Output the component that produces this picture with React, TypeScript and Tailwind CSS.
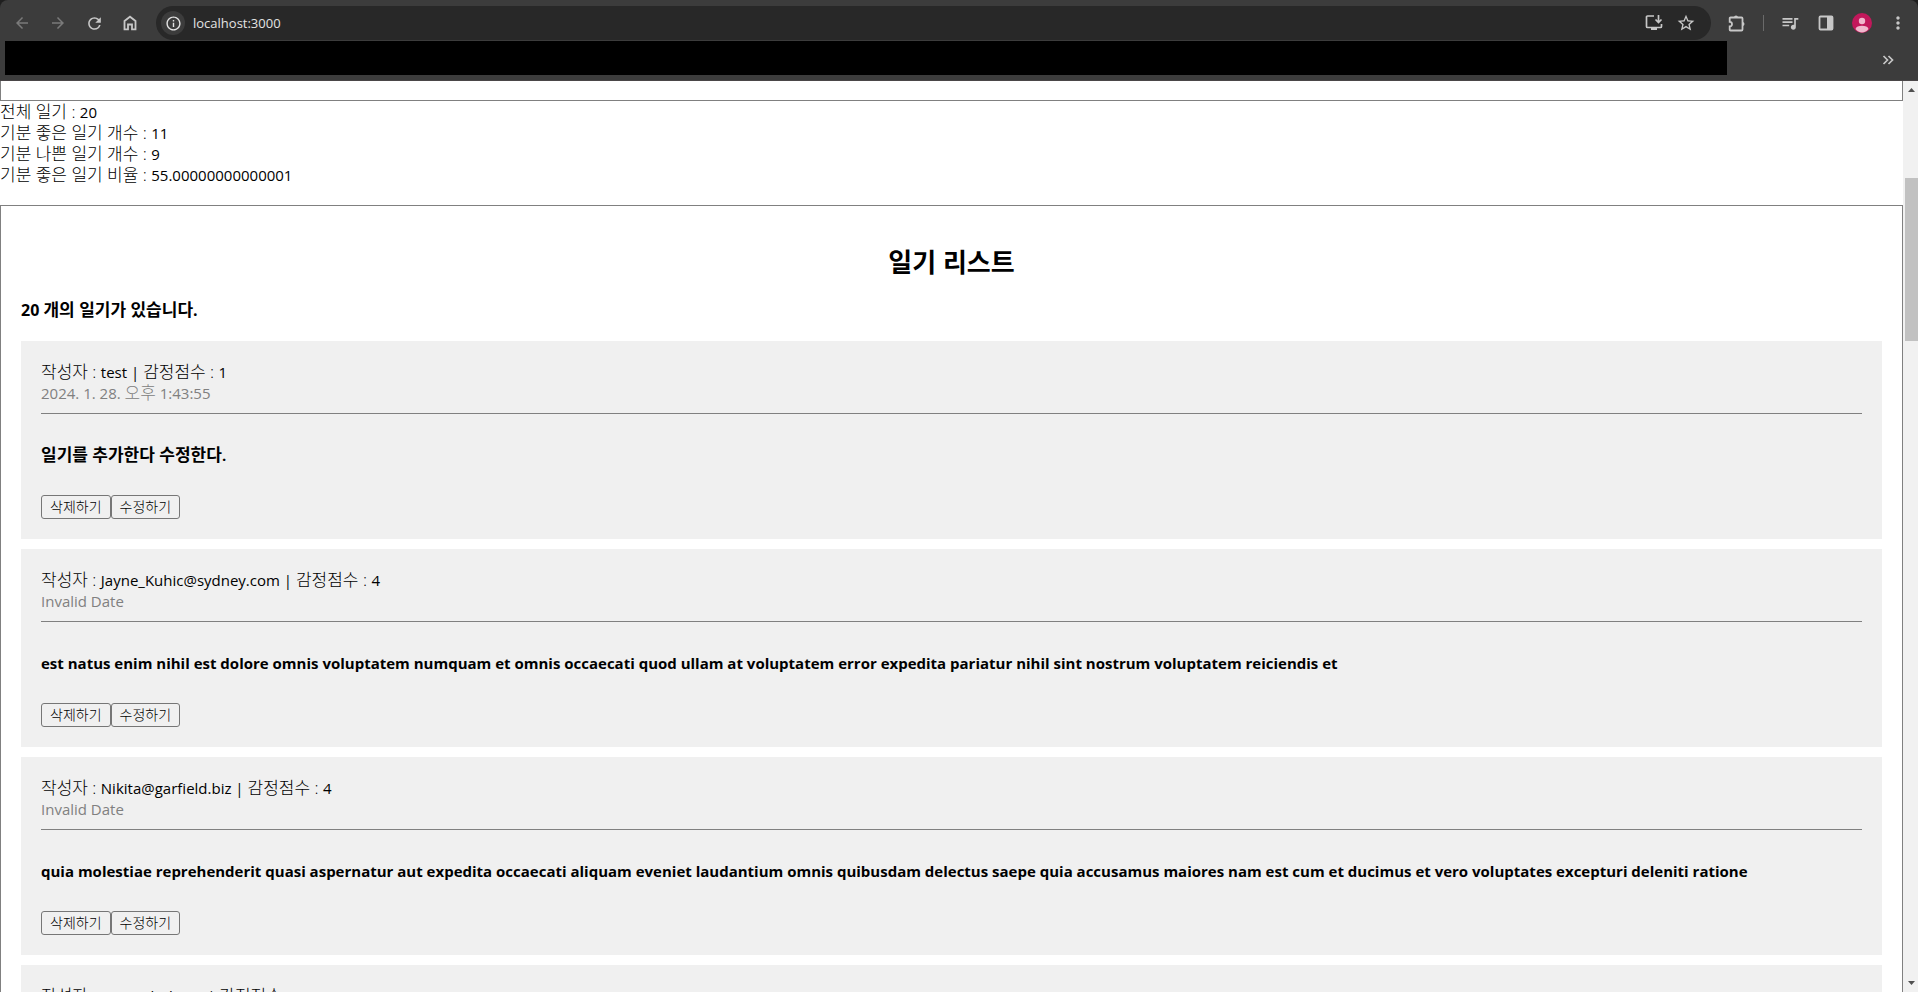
import React from 'react';
import {
  MdArrowBack,
  MdArrowForward,
  MdInfoOutline,
  MdMoreVert,
  MdQueueMusic,
  MdRefresh,
  MdStarBorder,
} from 'react-icons/md';
import clsx from 'clsx';

interface Diary {
  id: number;
  author: string;
  emotion: number;
  date: string;
  content: string;
}

const diaries: Diary[] = [
  {
    id: 1,
    author: 'test',
    emotion: 1,
    date: '2024. 1. 28. 오후 1:43:55',
    content: '일기를 추가한다 수정한다.',
  },
  {
    id: 2,
    author: 'Jayne_Kuhic@sydney.com',
    emotion: 4,
    date: 'Invalid Date',
    content:
      'est natus enim nihil est dolore omnis voluptatem numquam et omnis occaecati quod ullam at voluptatem error expedita pariatur nihil sint nostrum voluptatem reiciendis et',
  },
  {
    id: 3,
    author: 'Nikita@garfield.biz',
    emotion: 4,
    date: 'Invalid Date',
    content:
      'quia molestiae reprehenderit quasi aspernatur aut expedita occaecati aliquam eveniet laudantium omnis quibusdam delectus saepe quia accusamus maiores nam est cum et ducimus et vero voluptates excepturi deleniti ratione',
  },
  {
    id: 4,
    author: 'Lew@alysha.tv',
    emotion: 4,
    date: 'Invalid Date',
    content:
      'non et atque occaecati deserunt quas accusantium unde odit nobis qui voluptatem quia voluptas consequuntur itaque dolor et qui rerum deleniti ut occaecati',
  },
];

const stats = [
  {label: '전체 일기', value: '20'},
  {label: '기분 좋은 일기 개수', value: '11'},
  {label: '기분 나쁜 일기 개수', value: '9'},
  {label: '기분 좋은 일기 비율', value: '55.00000000000001'},
];

// Hangul runs (with a trailing colon) are larger than the latin text around them
const splitHangul = (text: string) =>
  text.split(/([가-힣]+(?: [가-힣]+)*(?: : )?)/).filter(Boolean);

const Mixed = ({text, bold = false}: {text: string; bold?: boolean}) => (
  <>
    {splitHangul(text).map((part, i) =>
      /[가-힣]/.test(part) ? (
        <span
          key={i}
          className={clsx('text-[17px] leading-none', !bold && 'font-light')}
        >
          {part}
        </span>
      ) : (
        part
      )
    )}
  </>
);

interface IconButtonProps {
  label: string;
  className?: string;
  children: React.ReactNode;
}

const IconButton = ({label, className, children}: IconButtonProps) => (
  <button
    aria-label={label}
    className={clsx('flex size-5 items-center justify-center', className)}
  >
    {children}
  </button>
);

const BrowserBar = () => (
  <header className="shrink-0 bg-[#1f1f1f] text-[#c7c7c7]">
    <div className="rounded-t-lg border-b border-[#4a4648] bg-[#3c3c3c]">
      <div className="flex items-center pt-1.5 pr-[10px] pl-3">
        <nav className="flex items-center gap-4">
          <IconButton label="Back" className="text-[#7a7a7a]">
            <MdArrowBack size={18} />
          </IconButton>
          <IconButton label="Forward" className="text-[#7a7a7a]">
            <MdArrowForward size={18} />
          </IconButton>
          <IconButton label="Reload">
            <MdRefresh size={19} />
          </IconButton>
          <IconButton label="Home">
            <svg width="14" height="16" viewBox="0 0 14 16" fill="none">
              <path
                d="M1.500 6L7 1.700 12.500 6v8.300H9V9.500H5v4.800H1.500z"
                stroke="currentColor"
                strokeWidth="1.800"
              />
            </svg>
          </IconButton>
        </nav>
        <div className="ml-4 flex h-[34px] flex-1 items-center rounded-full bg-[#282828] pr-[15px] pl-[5px]">
          <button
            aria-label="Site information"
            className="flex size-6 items-center justify-center rounded-full bg-[#3c3c3c] text-[#e3e3e3]"
          >
            <MdInfoOutline size={17} />
          </button>
          <input
            aria-label="Address"
            defaultValue="localhost:3000"
            className="ml-2 flex-1 bg-transparent text-[13px] text-[#e3e3e3] outline-none"
          />
          <div className="flex items-center gap-3">
            <IconButton label="Install">
              <svg width="18" height="18" viewBox="0 0 18 18" fill="none">
                <path
                  d="M9 2H2.5a1 1 0 0 0-1 1v9.5a1 1 0 0 0 1 1h13a1 1 0 0 0 1-1V10"
                  stroke="currentColor"
                  strokeWidth="1.700"
                />
                <path
                  d="M13.500 1v7M10.500 5.500l3 3 3-3"
                  stroke="currentColor"
                  strokeWidth="1.700"
                />
                <path d="M6 13h6v3H6z" fill="currentColor" />
              </svg>
            </IconButton>
            <IconButton label="Bookmark">
              <MdStarBorder size={20} />
            </IconButton>
          </div>
        </div>
        <div className="ml-4 flex items-center">
          <IconButton label="Extensions">
            <svg width="18" height="18" viewBox="0 0 18 18" fill="none">
              <path
                d="M2.500 3.500h11a1 1 0 0 1 1 1v11a1 1 0 0 1-1 1h-11a.8.8 0 0 1-.8-.8v-3.200a2.300 2.300 0 0 0 0-4.600V4.300a.8.8 0 0 1 .8-.8z"
                stroke="currentColor"
                strokeWidth="1.800"
              />
              <path
                d="M6 3.500a2 2 0 0 1 4 0zM14.500 8a2 2 0 0 1 0 4z"
                fill="currentColor"
              />
            </svg>
          </IconButton>
          <span className="mx-4 h-4 w-px bg-[#6a6a6a]" />
          <div className="flex items-center gap-4">
            <IconButton label="Media">
              <MdQueueMusic size={20} />
            </IconButton>
            <IconButton label="Side panel">
              <svg width="16" height="16" viewBox="0 0 16 16" fill="none">
                <rect
                  x="1.500"
                  y="1.500"
                  width="13"
                  height="13"
                  rx="1"
                  stroke="currentColor"
                  strokeWidth="1.800"
                />
                <path d="M9 1.500h5.500v13H9z" fill="currentColor" />
              </svg>
            </IconButton>
            <IconButton label="Profile">
              <svg width="20" height="20" viewBox="0 0 20 20">
                <circle cx="10" cy="10" r="10" fill="#c2185b" />
                <circle cx="10" cy="8" r="3.200" fill="#f0b8cd" />
                <path
                  d="M3.500 16c.5-2 3.200-3.200 6.500-3.200s6 1.200 6.500 3.200c-1.500 2.200-4 3.400-6.500 3.400S5 18.200 3.500 16z"
                  fill="#f0b8cd"
                />
              </svg>
            </IconButton>
            <IconButton label="Menu">
              <MdMoreVert size={20} />
            </IconButton>
          </div>
        </div>
      </div>
      <div className="flex items-start pt-px pr-6 pb-[5px] pl-[5px]">
        <div className="mr-[155px] h-[34px] flex-1 bg-black" />
        <button aria-label="More bookmarks" className="mt-[13px]">
          <svg width="12" height="12" viewBox="0 0 12 12" fill="none">
            <path
              d="M1.500 2l4 4-4 4M6.500 2l4 4-4 4"
              stroke="currentColor"
              strokeWidth="1.700"
            />
          </svg>
        </button>
      </div>
    </div>
  </header>
);

const DiaryItem: React.FC<Diary> = ({author, emotion, date, content}) => (
  <article className="bg-[#f0f0f0] px-5 pt-[21px] pb-5">
    <div className="border-b border-[#808080] pb-[9px]">
      <p>
        <Mixed text={`작성자 : ${author} | 감정점수 : ${emotion}`} />
      </p>
      <p className="text-[#808080]">
        <Mixed text={date} />
      </p>
    </div>
    <p className="mt-[31px] mb-[29px] font-bold">
      <Mixed text={content} bold />
    </p>
    <div className="flex text-sm font-light">
      {['삭제하기', '수정하기'].map(label => (
        <button
          key={label}
          className="h-6 rounded-[3px] border border-[#767676] px-2 leading-none"
        >
          {label}
        </button>
      ))}
    </div>
  </article>
);

const Scrollbar = () => (
  <div className="flex w-[15px] shrink-0 flex-col items-center justify-between bg-[#f1f1f1] pt-[7px] pb-[7px] pl-px">
    <svg width="7" height="4" viewBox="0 0 7 4">
      <path d="M3.500 0L7 4H0z" fill="#505050" />
    </svg>
    <div className="mt-[86px] mb-auto h-[163px] w-[13px] self-end bg-[#c1c1c1]" />
    <svg width="7" height="4" viewBox="0 0 7 4">
      <path d="M0 0h7L3.500 4z" fill="#505050" />
    </svg>
  </div>
);

export default function App() {
  return (
    <div className="flex h-screen flex-col overflow-hidden bg-white font-['Open_Sans','Noto_Sans_CJK_KR',sans-serif] text-[15px] leading-[21px] text-black">
      <BrowserBar />
      <div className="flex min-h-0 flex-1">
        <main className="min-w-0 flex-1 overflow-hidden">
          <div className="h-5 border-x border-b border-[#808080]" />
          <section className="pt-px">
            {stats.map(({label, value}) => (
              <p key={label}>
                <Mixed text={`${label} : ${value}`} />
              </p>
            ))}
          </section>
          <section className="mt-[19px] border border-[#808080] p-5">
            <h2 className="my-5 text-center text-[26px] leading-8 font-bold">
              일기 리스트
            </h2>
            <h4 className="mt-[22px] mb-5 text-base leading-[21px] font-bold">
              <Mixed text="20 개의 일기가 있습니다." bold />
            </h4>
            <div className="flex flex-col gap-[10px]">
              {diaries.map(diary => (
                <DiaryItem key={diary.id} {...diary} />
              ))}
            </div>
          </section>
        </main>
        <Scrollbar />
      </div>
    </div>
  );
}
